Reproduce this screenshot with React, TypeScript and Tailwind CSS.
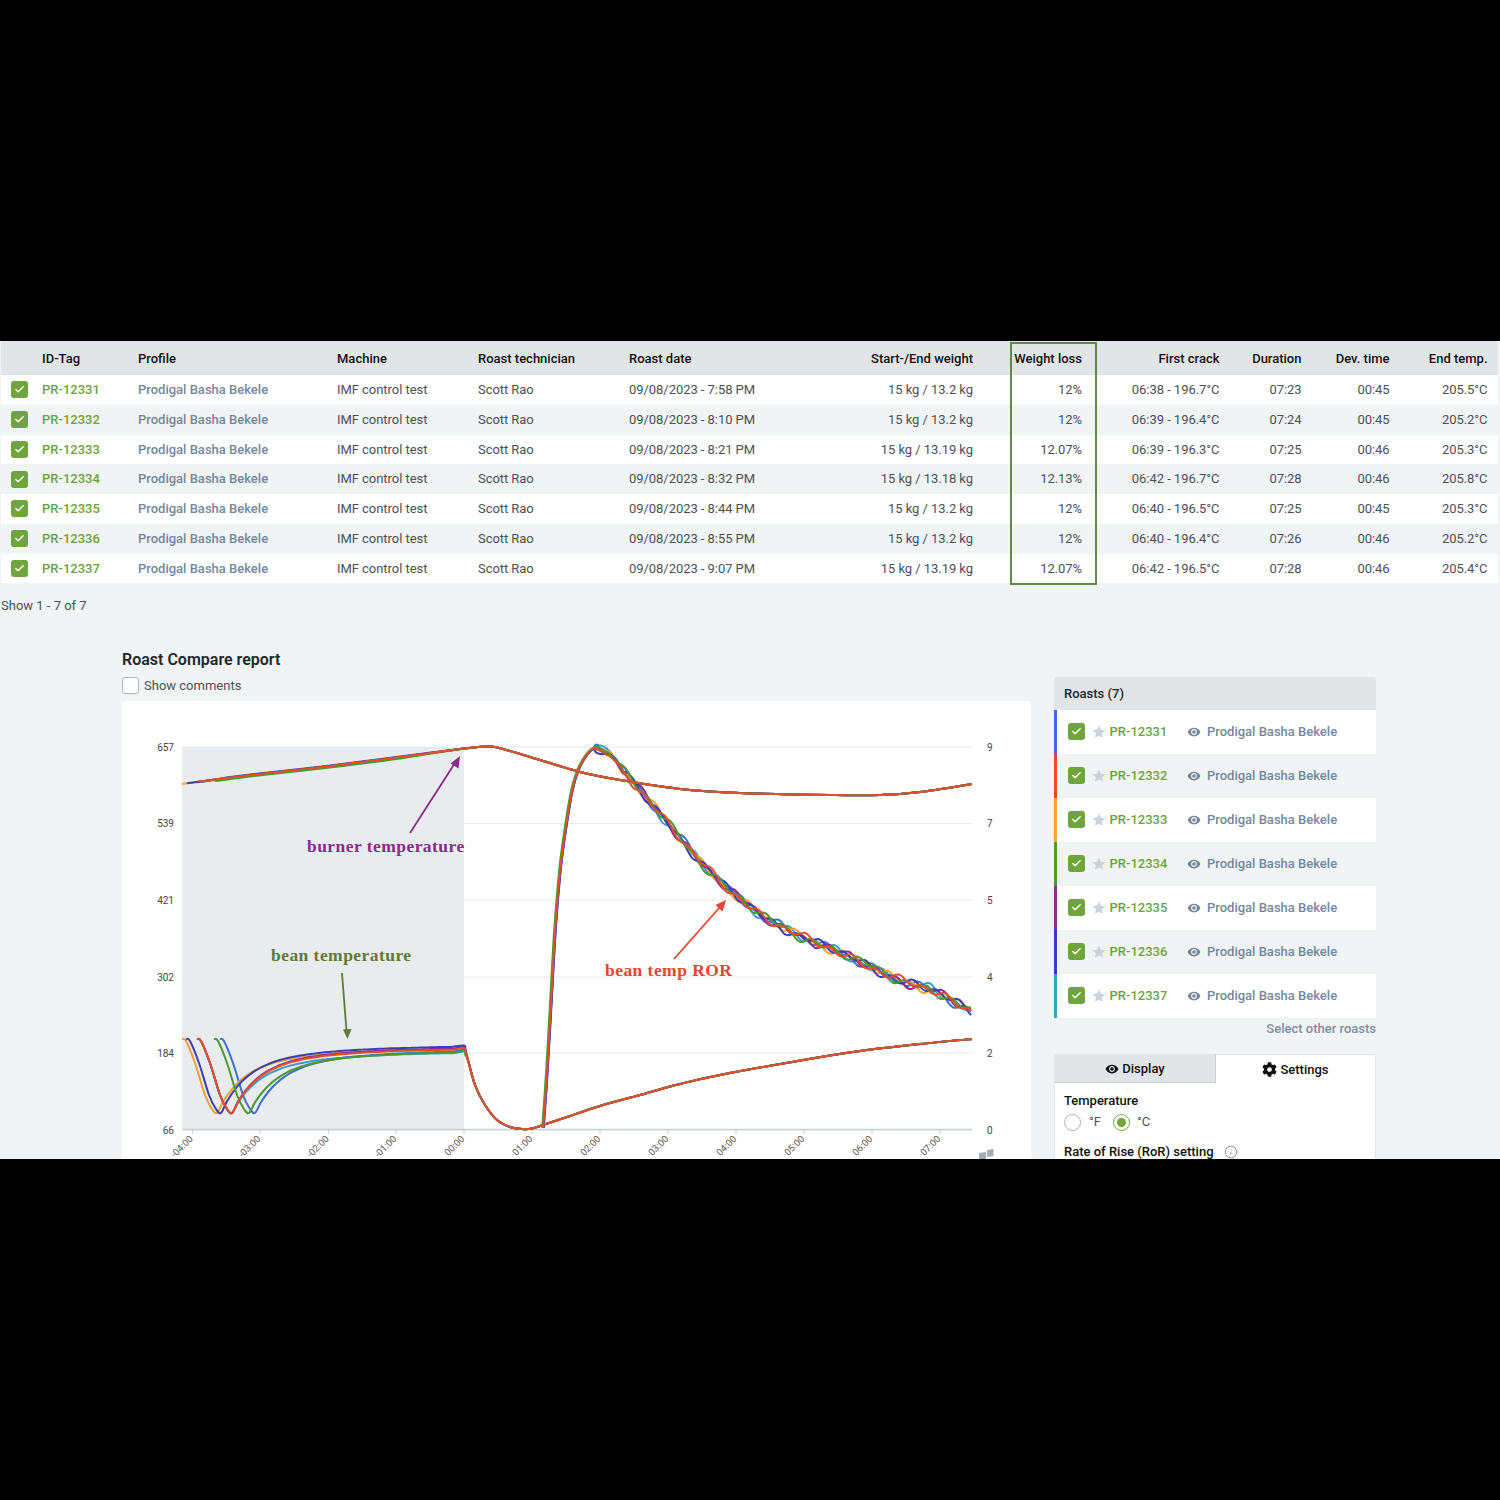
import { Check, Info } from "lucide-react";
import { FaCog } from "react-icons/fa";
import { MdStar, MdVisibility } from "react-icons/md";

type Pt = [number, number];

const ROWS = [
  ["PR-12331", "09/08/2023 - 7:58 PM", "15 kg / 13.2 kg", "12%", "06:38 - 196.7°C", "07:23", "00:45", "205.5°C"],
  ["PR-12332", "09/08/2023 - 8:10 PM", "15 kg / 13.2 kg", "12%", "06:39 - 196.4°C", "07:24", "00:45", "205.2°C"],
  ["PR-12333", "09/08/2023 - 8:21 PM", "15 kg / 13.19 kg", "12.07%", "06:39 - 196.3°C", "07:25", "00:46", "205.3°C"],
  ["PR-12334", "09/08/2023 - 8:32 PM", "15 kg / 13.18 kg", "12.13%", "06:42 - 196.7°C", "07:28", "00:46", "205.8°C"],
  ["PR-12335", "09/08/2023 - 8:44 PM", "15 kg / 13.2 kg", "12%", "06:40 - 196.5°C", "07:25", "00:45", "205.3°C"],
  ["PR-12336", "09/08/2023 - 8:55 PM", "15 kg / 13.2 kg", "12%", "06:40 - 196.4°C", "07:26", "00:46", "205.2°C"],
  ["PR-12337", "09/08/2023 - 9:07 PM", "15 kg / 13.19 kg", "12.07%", "06:42 - 196.5°C", "07:28", "00:46", "205.4°C"],
];

const COLS = "grid grid-cols-[41px_96px_199px_141px_151px_200px_144px_109px_137.5px_82px_88px_98px] items-center";

// Roast order in the side list; draw order on the chart is separate
const ROASTS = [
  { id: "PR-12331", bar: "bg-[#3f6fd0]" },
  { id: "PR-12332", bar: "bg-[#d9502e]" },
  { id: "PR-12333", bar: "bg-[#f5a742]" },
  { id: "PR-12334", bar: "bg-[#4f9a2f]" },
  { id: "PR-12335", bar: "bg-[#8e2a9a]" },
  { id: "PR-12336", bar: "bg-[#3b3fae]" },
  { id: "PR-12337", bar: "bg-[#3f9ad0]" },
];

const SERIES = [
  { color: "#3f9ad0", burnX: 197, burnY: 0.5, trough: 232, end: 1051.5, peak: -1, seed: 6, rise: 0.4, tail: -3 },
  { color: "#3f6fd0", burnX: 222, burnY: -0.5, trough: 255, end: 1049.5, peak: 0, seed: 1, rise: 0.8, tail: 1 },
  { color: "#f5a033", burnX: 182, burnY: 0, trough: 217, end: 1048, peak: 2, seed: 2, rise: 0, tail: -6 },
  { color: "#8e2a9a", burnX: 198, burnY: 0, trough: 232, end: 1047, peak: 3, seed: 4, rise: 0.3, tail: 0 },
  { color: "#3b3fae", burnX: 187, burnY: 0, trough: 221, end: 1045.5, peak: 4, seed: 5, rise: 0.6, tail: 0 },
  { color: "#4a9a2e", burnX: 215, burnY: 1.5, trough: 249, end: 1050.5, peak: 0, seed: 3, rise: -0.8, tail: 1 },
  { color: "#e0502a", burnX: 198, burnY: 0, trough: 232, end: 1048, peak: 4, seed: 7, rise: 0.2, tail: -1 },
];

const BURNER: Pt[] = [
  [182, 784], [250, 775], [330, 766], [400, 757], [464, 748.5], [490, 746.5], [510, 751], [540, 760],
  [580, 772], [620, 780], [680, 789], [740, 793], [830, 795], [880, 795], [920, 792], [972, 784],
];

const BEAN_AFTER: Pt[] = [
  [468, 1060], [475, 1085], [485, 1105], [497, 1120], [510, 1127], [522, 1129], [532, 1128.5],
  [543, 1125], [567, 1117], [600, 1106], [640, 1095], [680, 1084], [720, 1075], [803, 1060], [860, 1051], [920, 1044], [972, 1039],
];

const ROR_RISE: Pt[] = [
  [543, 1128], [547, 1070], [551, 1000], [555, 930], [560, 870], [566, 825], [572, 790], [578, 770], [585, 757], [592, 749],
];

const ROR_FALL: Pt[] = [
  [600, 748], [610, 752], [618, 762], [633, 782], [667, 822], [700, 862], [727, 888], [763, 917], [803, 938],
  [830, 948], [863, 963], [897, 980], [933, 990], [972, 1012],
];

function lerp(pts: Pt[], x: number) {
  for (let i = 1; i < pts.length; i++) {
    if (x <= pts[i][0]) {
      const [x0, y0] = pts[i - 1];
      const [x1, y1] = pts[i];
      return y0 + ((y1 - y0) * (x - x0)) / (x1 - x0);
    }
  }
  return pts[pts.length - 1][1];
}

// catmull-rom through the points, written as cubic beziers
function smooth(pts: Pt[]) {
  let d = `M${pts[0][0]} ${pts[0][1]}`;
  for (let i = 0; i < pts.length - 1; i++) {
    const p0 = pts[Math.max(i - 1, 0)];
    const p1 = pts[i];
    const p2 = pts[i + 1];
    const p3 = pts[Math.min(i + 2, pts.length - 1)];
    const c1x = p1[0] + (p2[0] - p0[0]) / 6;
    const c1y = p1[1] + (p2[1] - p0[1]) / 6;
    const c2x = p2[0] - (p3[0] - p1[0]) / 6;
    const c2y = p2[1] - (p3[1] - p1[1]) / 6;
    d += `C${c1x.toFixed(1)} ${c1y.toFixed(1)} ${c2x.toFixed(1)} ${c2y.toFixed(1)} ${p2[0].toFixed(1)} ${p2[1].toFixed(1)}`;
  }
  return d;
}

function burnerPath(s: (typeof SERIES)[number]) {
  const pts = BURNER.filter((p) => p[0] > s.burnX).map(([x, y]): Pt => [x, x < 464 ? y + s.burnY : y]);
  return smooth([[s.burnX, lerp(BURNER, s.burnX) + s.burnY], ...pts]);
}

function beanPath(s: (typeof SERIES)[number]) {
  const t = s.trough;
  const pts: Pt[] = [[t - 35, 1039], [t - 31, 1041], [t - 22, 1063], [t - 12, 1095], [t - 5, 1109], [t, 1113]];
  // fast recovery first, then a slow creep up to the charge point
  for (let x = t + 6; x < 456; x += 8) {
    const dx = x - t;
    pts.push([x, s.end + (1113 - s.end - 21) * Math.exp(-dx / 24) + 21 * Math.exp(-dx / 85)]);
  }
  pts.push([464, s.end], [465.5, s.end + 4]);
  return smooth([...pts, ...BEAN_AFTER]);
}

function rorPath(s: (typeof SERIES)[number]) {
  const pts: Pt[] = ROR_RISE.map(([x, y]): Pt => [x + s.rise, y]);
  for (let x = 596; x <= 972; x += 3) {
    const ramp = Math.min(Math.max((x - 590) / 40, 0.5), 1);
    const wob =
      2.8 * Math.sin(x * 0.27 + s.seed * 1.9) +
      2 * Math.sin(x * 0.13 + s.seed * 3.7) +
      1.2 * Math.sin(x * 0.06 + s.seed);
    const lift = x < 625 ? s.peak : 0;
    const tail = x > 950 ? (s.tail * (x - 950)) / 22 : 0;
    pts.push([x, lerp(ROR_FALL, x) + lift + wob * ramp + tail]);
  }
  return smooth(pts);
}

const GRID = [
  { y: 747, left: "657", right: "9" },
  { y: 823.5, left: "539", right: "7" },
  { y: 900, left: "421", right: "5" },
  { y: 977, left: "302", right: "4" },
  { y: 1053, left: "184", right: "2" },
  { y: 1130, left: "66", right: "0" },
];

const TICKS = [
  [192.5, "-04:00"], [260, "-03:00"], [328.5, "-02:00"], [396, "-01:00"], [464, "00:00"], [532, "01:00"],
  [600, "02:00"], [668, "03:00"], [736, "04:00"], [804, "05:00"], [872, "06:00"], [940, "07:00"],
] as const;

function Checked() {
  return (
    <span className="flex h-[17px] w-[17px] items-center justify-center rounded-[3px] bg-[#6fa53c]">
      <Check size={11} strokeWidth={3} className="text-white" />
    </span>
  );
}

function Chart() {
  return (
    <svg viewBox="122 701 909 458" className="block h-[458px] w-[909px]">
      <rect x="182" y="747" width="282" height="383" fill="#e9ecef" />
      {GRID.map((g) => (
        <g key={g.y}>
          <line x1="182" x2="972" y1={g.y} y2={g.y} stroke="#e6eaee" strokeWidth="1" />
          <text x="174" y={g.y + 3.5} textAnchor="end" fontSize="10" fill="#444">{g.left}</text>
          <text x="987" y={g.y + 3.5} fontSize="10" fill="#444">{g.right}</text>
        </g>
      ))}
      <line x1="182" x2="972" y1="1129.5" y2="1129.5" stroke="#c8d0d8" strokeWidth="1.5" />
      {TICKS.map(([x, label]) => (
        <g key={label}>
          <line x1={x} x2={x} y1="1130" y2="1134" stroke="#c8d0d8" />
          <text
            x={x + 1}
            y={1139.5}
            textAnchor="end"
            fontSize="9.5"
            fill="#555"
            transform={`rotate(-45 ${x + 1} 1139.5)`}
          >
            {label}
          </text>
        </g>
      ))}
      {SERIES.map((s) => (
        <g key={s.color} fill="none" stroke={s.color} strokeWidth="2" strokeLinejoin="round">
          <path d={burnerPath(s)} />
          <path d={beanPath(s)} />
          <path d={rorPath(s)} />
        </g>
      ))}

      {/* hand-drawn notes on top of the chart */}
      <g fontFamily="'Liberation Serif', serif" fontWeight="700" fontSize="17.5" letterSpacing="0.45">
        <text x="307" y="852" fill="#8a2a8a">burner temperature</text>
        <text x="271" y="961" fill="#5f7a35">bean temperature</text>
        <text x="605" y="976" fill="#e8452c">bean temp ROR</text>
      </g>
      <line x1="410" y1="833" x2="455" y2="763" stroke="#8a2a8a" strokeWidth="1.8" />
      <path d="M460 756l-1.5 12.5-8-5z" fill="#8a2a8a" />
      <line x1="342" y1="973" x2="346.5" y2="1031" stroke="#5f7a35" strokeWidth="1.8" />
      <path d="M347.5 1039l-4.5-9.500 8.500-.5z" fill="#5f7a35" />
      <line x1="674" y1="959" x2="720" y2="907" stroke="#e8452c" strokeWidth="1.8" />
      <path d="M726 900l-3.500 11.500-7-6.500z" fill="#e8452c" />

      <path d="M979 1153l7-1v8h-7zM987 1150l6.500-1v7l-6.500 1z" fill="#a9acae" />
    </svg>
  );
}

export default function App() {
  return (
    <div className="flex h-[1500px] flex-col bg-black pt-[341px] [font-family:Roboto,sans-serif] text-[13px]">
      <div className="h-[818px] overflow-hidden bg-[#f1f4f5]">
        {/* roast table */}
        <div className="relative pl-px pr-[2px]">
          <div className={`${COLS} h-[34px] rounded-t-[2px] bg-[#e2e5e8] pt-px font-medium text-[#111]`}>
            <span />
            <span>ID-Tag</span>
            <span>Profile</span>
            <span>Machine</span>
            <span>Roast technician</span>
            <span>Roast date</span>
            <span className="text-right">Start-/End weight</span>
            <span className="text-right">Weight loss</span>
            <span className="text-right">First crack</span>
            <span className="text-right">Duration</span>
            <span className="text-right">Dev. time</span>
            <span className="text-right">End temp.</span>
          </div>
          {ROWS.map((r, i) => (
            <div
              key={r[0]}
              className={`${COLS} h-[29.75px] tracking-[-0.05px] text-[#4b5056] ${i % 2 === 0 ? "bg-white" : "bg-[#f1f4f5]"}`}
            >
              <span className="pl-[10px]">
                <Checked />
              </span>
              <span className="font-medium tracking-normal text-[#6da33a]">{r[0]}</span>
              <span className="font-medium tracking-normal text-[#73889c]">Prodigal Basha Bekele</span>
              <span>IMF control test</span>
              <span>Scott Rao</span>
              <span>{r[1]}</span>
              <span className="text-right">{r[2]}</span>
              <span className="text-right">{r[3]}</span>
              <span className="text-right">{r[4]}</span>
              <span className="text-right">{r[5]}</span>
              <span className="text-right">{r[6]}</span>
              <span className="text-right">{r[7]}</span>
            </div>
          ))}
          <div className="absolute left-[1010px] top-px h-[243px] w-[87px] border-2 border-[#5f8a4a]" />
        </div>

        <p className="mt-[15px] pl-px leading-[16px] text-[#4b5056]">Show 1 - 7 of 7</p>

        <div className="mt-[36px] flex items-start pl-[122px]">
          <div className="w-[909px]">
            <h2 className="h-[20px] text-[16px] font-semibold leading-[20px] text-[#22262a]">Roast Compare report</h2>
            <label className="mt-[7px] flex h-[17px] items-center gap-[5px] text-[#4b5056]">
              <span className="h-[17px] w-[17px] rounded-[3px] border border-[#aab4be] bg-white" />
              Show comments
            </label>
            <div className="mt-[7px] rounded-t-[3px] bg-white">
              <Chart />
            </div>
          </div>

          <div className="ml-[23px] mt-[27px] w-[322px]">
            <div className="flex h-[33px] items-center rounded-t-[3px] bg-[#e2e5e8] pl-[10px] font-medium text-[#22262a]">
              Roasts (7)
            </div>
            {ROASTS.map((r, i) => (
              <div key={r.id} className={`flex h-[44px] ${i % 2 === 0 ? "bg-white" : "bg-[#f1f4f5]"}`}>
                <span className={`h-full w-[3px] ${r.bar}`} />
                <div className="flex flex-1 items-center pb-px">
                  <span className="ml-[11px]">
                    <Checked />
                  </span>
                  <MdStar size={16} className="ml-[6px] text-[#c9d3da]" />
                  <span className="ml-[2.5px] w-[77.5px] font-medium text-[#6da33a]">{r.id}</span>
                  <MdVisibility size={14} className="text-[#73889c]" />
                  <span className="ml-[6px] font-medium text-[#73889c]">Prodigal Basha Bekele</span>
                </div>
              </div>
            ))}
            <p className="mt-[1px] h-[20px] text-right font-medium leading-[20px] text-[#7f8f9e]">Select other roasts</p>

            <div className="mt-[15px] rounded-t-[3px] border border-[#e2e5e8] bg-white">
              <div className="flex h-[28px] font-medium text-[#111]">
                <div className="flex w-[161px] items-center justify-center gap-[3px] border-b border-r border-[#c8ced3] bg-[#e2e5e8]">
                  <MdVisibility size={14} /> Display
                </div>
                <div className="flex flex-1 items-center justify-center gap-[3px]">
                  <FaCog size={15} /> Settings
                </div>
              </div>
              <div className="px-[9px] pt-[10px]">
                <p className="font-medium leading-[16px] text-[#111]">Temperature</p>
                <div className="mt-[3px] flex items-center text-[#4b5056]">
                  <span className="h-[17px] w-[17px] rounded-full border border-[#aab4be]" />
                  <span className="ml-[8px] w-[24px]">°F</span>
                  <span className="flex h-[17px] w-[17px] items-center justify-center rounded-full border border-[#6fa53c]">
                    <span className="h-[9px] w-[9px] rounded-full bg-[#6fa53c]" />
                  </span>
                  <span className="ml-[7px]">°C</span>
                </div>
                <div className="mt-[10px] flex items-center gap-[10px] font-medium text-[#111]">
                  Rate of Rise (RoR) setting
                  <Info size={14} strokeWidth={1.5} className="text-[#73889c]" />
                </div>
              </div>
            </div>
          </div>
        </div>
      </div>
    </div>
  );
}
